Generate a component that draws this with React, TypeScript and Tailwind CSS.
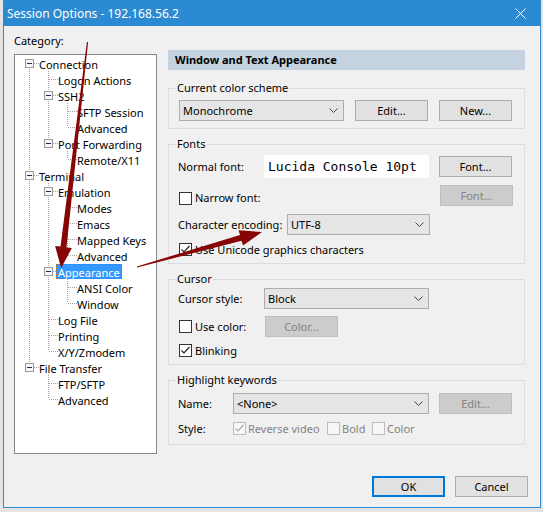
import React from 'react';

type TreeNode = { label: string; children?: TreeNode[]; selected?: boolean };

const tree: TreeNode[] = [
  {
    label: 'Connection',
    children: [
      { label: 'Logon Actions' },
      { label: 'SSH2', children: [{ label: 'SFTP Session' }, { label: 'Advanced' }] },
      { label: 'Port Forwarding', children: [{ label: 'Remote/X11' }] },
    ],
  },
  {
    label: 'Terminal',
    children: [
      {
        label: 'Emulation',
        children: [{ label: 'Modes' }, { label: 'Emacs' }, { label: 'Mapped Keys' }, { label: 'Advanced' }],
      },
      { label: 'Appearance', selected: true, children: [{ label: 'ANSI Color' }, { label: 'Window' }] },
      { label: 'Log File' },
      { label: 'Printing' },
      { label: 'X/Y/Zmodem' },
    ],
  },
  { label: 'File Transfer', children: [{ label: 'FTP/SFTP' }, { label: 'Advanced' }] },
];

type Row = {
  label: string;
  guides: boolean[];
  first: boolean;
  last: boolean;
  expandable: boolean;
  selected: boolean;
};

function flatten(nodes: TreeNode[], depth = 0, guides: boolean[] = [], rows: Row[] = []) {
  nodes.forEach((n, i) => {
    const last = i === nodes.length - 1;
    rows.push({
      label: n.label,
      guides,
      first: depth === 0 && i === 0,
      last,
      expandable: !!n.children,
      selected: !!n.selected,
    });
    if (n.children) flatten(n.children, depth + 1, [...guides, !last], rows);
  });
  return rows;
}

const rows = flatten(tree);

function Guide({ on }: { on: boolean }) {
  return (
    <svg width="19" height="16" className="shrink-0">
      {on && <line x1="9.5" y1="0" x2="9.5" y2="16" stroke="#a0a0a0" strokeDasharray="1 1" />}
    </svg>
  );
}

function Connector({ row }: { row: Row }) {
  return (
    <svg width="19" height="16" className="shrink-0">
      <g stroke="#a0a0a0" strokeDasharray="1 1">
        {!row.first && <line x1="9.5" y1="0" x2="9.5" y2="8" />}
        {!row.last && <line x1="9.5" y1="8" x2="9.5" y2="16" />}
        <line x1="10" y1="8.5" x2="19" y2="8.5" />
      </g>
      {row.expandable && (
        <>
          <rect x="5.5" y="4.5" width="8" height="8" fill="#f7f7f7" stroke="#9a9a9a" />
          <line x1="7" y1="8.5" x2="12" y2="8.5" stroke="#1e2a5a" />
        </>
      )}
    </svg>
  );
}

function Chevron() {
  return (
    <svg width="9" height="5" className="shrink-0">
      <polyline points="0.5,0.5 4.5,4.5 8.5,0.5" fill="none" stroke="#444" />
    </svg>
  );
}

function Select({ value, w }: { value: string; w: string }) {
  return (
    <div className={`${w} h-[21px] shrink-0 flex items-center justify-between border border-[#adadad] bg-[#e5e5e5] pl-[3px] pr-[5px]`}>
      <span>{value}</span>
      <Chevron />
    </div>
  );
}

function Btn({ label, disabled, primary }: { label: string; disabled?: boolean; primary?: boolean }) {
  const look = disabled
    ? 'border border-[#bfbfbf] bg-[#cccccc] text-[#838383]'
    : primary
      ? 'border-2 border-[#0078d7] bg-[#e1e1e1]'
      : 'border border-[#adadad] bg-[#e1e1e1]';
  return <div className={`w-[73px] h-[21px] shrink-0 flex items-center justify-center ${look}`}>{label}</div>;
}

function Check({ checked, disabled }: { checked?: boolean; disabled?: boolean }) {
  return (
    <div
      className={`w-[13px] h-[13px] shrink-0 border ${disabled ? 'border-[#bcbcbc] bg-[#f7f7f7]' : 'border-[#333333] bg-white'}`}
    >
      {checked && (
        <svg width="11" height="11">
          <polyline points="1.5,5.5 4,8 9.5,2" fill="none" stroke={disabled ? '#a8a8a8' : '#222'} strokeWidth="1.2" />
        </svg>
      )}
    </div>
  );
}

function Group({ title, className, children }: { title: string; className: string; children: React.ReactNode }) {
  return (
    <div className={`relative border border-[#dcdcdc] ${className}`}>
      <span className="absolute left-[7px] -top-[8px] bg-[#f0f0f0] px-[1px] leading-[14px]">{title}</span>
      {children}
    </div>
  );
}

export default function App() {
  return (
    <div className="relative w-[543px] h-[512px] overflow-hidden bg-[#e4e4e4] font-['Noto_Sans',sans-serif] text-[11px] text-black leading-[14px]">
      <div className="ml-[3px] w-[538px] h-[508px] border border-[#2c8ad3] bg-[#f0f0f0] flex flex-col">
        {/* title bar */}
        <div className="h-[25px] shrink-0 bg-[#2c8ad3] flex items-center justify-between pl-[3px] pr-[14px] text-white text-[12px]">
          <span>Session Options - 192.168.56.2</span>
          <svg width="11" height="11">
            <path d="M0.5 0.5 L10.5 10.5 M10.5 0.5 L0.5 10.5" stroke="#fff" strokeWidth="1" />
          </svg>
        </div>

        <div className="flex-1 px-[10px] pt-[8px]">
          <div className="flex">
            {/* category tree */}
            <div className="w-[143px] shrink-0">
              <div className="h-[14px]">Category:</div>
              <div className="mt-[6px] h-[400px] border border-[#828790] bg-white pl-[5px] overflow-hidden">
                {rows.map((r, i) => (
                  <div key={i} className="flex h-[16px] items-start">
                    {r.guides.map((g, j) => (
                      <Guide key={j} on={g} />
                    ))}
                    <Connector row={r} />
                    {r.selected ? (
                      <span className="-ml-[2px] mt-[1px] h-[15px] px-[1px] leading-[15px] bg-[#3399ff] text-white border border-dotted border-[#c86414] whitespace-nowrap">
                        {r.label}
                      </span>
                    ) : (
                      <span className="h-[16px] leading-[19px] whitespace-nowrap">{r.label}</span>
                    )}
                  </div>
                ))}
              </div>
            </div>

            {/* settings */}
            <div className="ml-[11px] w-[357px] shrink-0 pt-[16px]">
              <div className="h-[20px] bg-[#c5d2df] pl-[7px] flex items-center font-bold">Window and Text Appearance</div>

              <Group title="Current color scheme" className="mt-[18px] h-[41px] pt-[11px] pl-[10px]">
                <div className="flex">
                  <Select value="Monochrome" w="w-[165px]" />
                  <div className="ml-[11px]">
                    <Btn label="Edit..." />
                  </div>
                  <div className="ml-[11px]">
                    <Btn label="New..." />
                  </div>
                </div>
              </Group>

              <Group title="Fonts" className="mt-[15px] h-[120px] pt-[10px] pl-[9px] pr-[11px]">
                <div className="flex items-center h-[23px]">
                  <div className="w-[86px] shrink-0">Normal font:</div>
                  <div className="w-[165px] h-[23px] shrink-0 bg-white pl-[4px] flex items-center font-['DejaVu_Sans_Mono',monospace] text-[13px]">
                    Lucida Console 10pt
                  </div>
                  <div className="ml-[10px]">
                    <Btn label="Font..." />
                  </div>
                </div>
                <div className="mt-[7px] h-[21px] flex items-end">
                  <div className="ml-[1px] mb-[1px] flex items-center">
                    <Check />
                    <span className="ml-[3px]">Narrow font:</span>
                  </div>
                  <div className="ml-auto self-start">
                    <Btn label="Font..." disabled />
                  </div>
                </div>
                <div className="mt-[8px] h-[21px] flex items-center">
                  <div className="w-[109px] shrink-0">Character encoding:</div>
                  <Select value="UTF-8" w="w-[143px]" />
                </div>
                <div className="mt-[8px] h-[13px] flex items-center">
                  <div className="ml-[1px]">
                    <Check checked />
                  </div>
                  <span className="ml-[3px]">Use Unicode graphics characters</span>
                </div>
              </Group>

              <Group title="Cursor" className="mt-[15px] h-[86px] pt-[8px] pl-[9px]">
                <div className="flex items-center h-[21px]">
                  <div className="w-[86px] shrink-0">Cursor style:</div>
                  <Select value="Block" w="w-[165px]" />
                </div>
                <div className="mt-[7px] h-[21px] flex items-center">
                  <div className="w-[87px] shrink-0 flex items-center pl-[1px]">
                    <Check />
                    <span className="ml-[3px]">Use color:</span>
                  </div>
                  <Btn label="Color..." disabled />
                </div>
                <div className="mt-[7px] h-[13px] flex items-center">
                  <div className="ml-[1px]">
                    <Check checked />
                  </div>
                  <span className="ml-[3px]">Blinking</span>
                </div>
              </Group>

              <Group title="Highlight keywords" className="mt-[15px] h-[65px] pt-[12px] pl-[9px]">
                <div className="flex items-center h-[21px]">
                  <div className="w-[55px] shrink-0">Name:</div>
                  <Select value="<None>" w="w-[196px]" />
                  <div className="ml-[10px]">
                    <Btn label="Edit..." disabled />
                  </div>
                </div>
                <div className="mt-[8px] h-[13px] flex items-center">
                  <div className="w-[55px] shrink-0">Style:</div>
                  <div className="w-[94px] shrink-0 flex items-center text-[#838383]">
                    <Check checked disabled />
                    <span className="ml-[2px]">Reverse video</span>
                  </div>
                  <div className="w-[45px] shrink-0 flex items-center text-[#838383]">
                    <Check disabled />
                    <span className="ml-[2px]">Bold</span>
                  </div>
                  <div className="flex items-center text-[#838383]">
                    <Check disabled />
                    <span className="ml-[2px]">Color</span>
                  </div>
                </div>
              </Group>
            </div>
          </div>

          <div className="mt-[22px] flex justify-end gap-[10px] pr-[2px]">
            <Btn label="OK" primary />
            <Btn label="Cancel" />
          </div>
        </div>
      </div>

      {/* annotation arrows */}
      <svg className="absolute left-0 top-0 pointer-events-none" width="543" height="512">
        <polygon
          points="86.9,41.9 88.1,42.1 66.5,247.4 71.9,248 61.1,267.9 55.1,246 60.5,246.6"
          fill="#870505"
        />
        <polygon
          points="136.9,266.5 240,235 238.6,230.2 262,232 243,245.6 241.6,240.8 137.1,267.5"
          fill="#870505"
        />
      </svg>
    </div>
  );
}
